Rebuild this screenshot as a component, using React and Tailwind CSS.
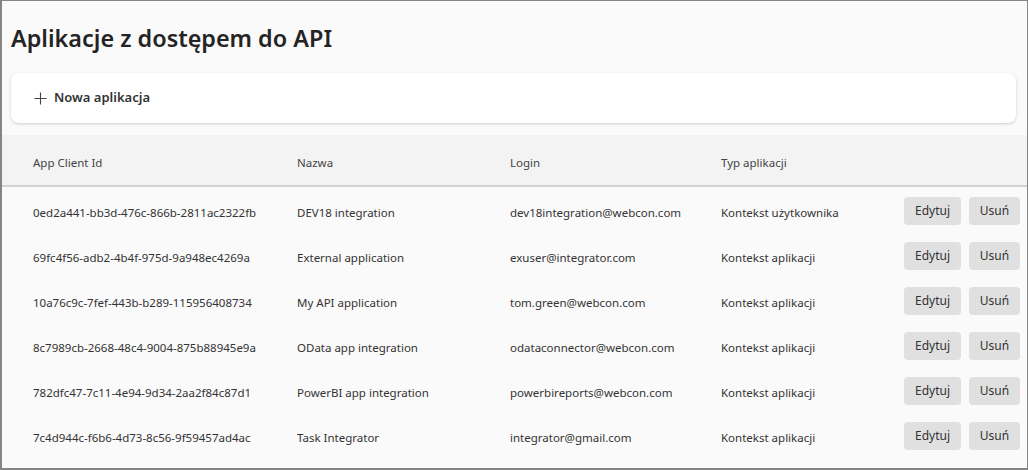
import React from 'react';

const rows = [
    { id: '0ed2a441-bb3d-476c-866b-2811ac2322fb', name: 'DEV18 integration', login: 'dev18integration@webcon.com', type: 'Kontekst użytkownika' },
    { id: '69fc4f56-adb2-4b4f-975d-9a948ec4269a', name: 'External application', login: 'exuser@integrator.com', type: 'Kontekst aplikacji' },
    { id: '10a76c9c-7fef-443b-b289-115956408734', name: 'My API application', login: 'tom.green@webcon.com', type: 'Kontekst aplikacji' },
    { id: '8c7989cb-2668-48c4-9004-875b88945e9a', name: 'OData app integration', login: 'odataconnector@webcon.com', type: 'Kontekst aplikacji' },
    { id: '782dfc47-7c11-4e94-9d34-2aa2f84c87d1', name: 'PowerBI app integration', login: 'powerbireports@webcon.com', type: 'Kontekst aplikacji' },
    { id: '7c4d944c-f6b6-4d73-8c56-9f59457ad4ac', name: 'Task Integrator', login: 'integrator@gmail.com', type: 'Kontekst aplikacji' },
];

const grid = 'grid grid-cols-[264px_213px_211px_1fr_auto] items-center pl-[31px] pr-[7px]';
const cell = 'pt-[6px] truncate';

export default function App() {
    return (
        <div
            className="w-[1028px] h-[470px] bg-[#fafafa] border border-l-2 border-b-2 border-[#858585] overflow-hidden text-[#333333]"
            style={{ fontFamily: '"Noto Sans", "Open Sans", sans-serif' }}
        >
            {/* Title */}
            <h1 className="pt-[21px] pl-[9px] text-[23.4px] leading-[32px] font-semibold text-[#242424]">
                Aplikacje z dostępem do API
            </h1>

            {/* Toolbar card */}
            <div className="mt-[19px] ml-[9px] mr-[11px] h-[50px] bg-white rounded-[8px] shadow-[0_1px_3px_rgba(0,0,0,0.18)] flex items-center pl-[23px]">
                <button className="flex items-center gap-[7px] text-[13px] font-semibold text-[#333333]">
                    <svg width="13" height="13" viewBox="0 0 13 13" className="text-[#444]">
                        <path d="M6.5 0.5v12M0.5 6.5h12" stroke="currentColor" strokeWidth="1.1" fill="none" />
                    </svg>
                    Nowa aplikacja
                </button>
            </div>

            {/* Table */}
            <div className="mt-[12px]">
                <div className={`${grid} h-[52px] bg-[#f3f3f3] border-b-2 border-[#d2d2d2] text-[11.5px] text-[#444444]`}>
                    <div className={cell}>App Client Id</div>
                    <div className={cell}>Nazwa</div>
                    <div className={cell}>Login</div>
                    <div className={cell}>Typ aplikacji</div>
                    <div />
                </div>
                {rows.map((row) => (
                    <div key={row.id} className={`${grid} h-[45px] text-[11.5px] text-[#333333]`}>
                        <div className={cell}>{row.id}</div>
                        <div className={cell}>{row.name}</div>
                        <div className={cell}>{row.login}</div>
                        <div className={cell}>{row.type}</div>
                        <div className="flex gap-[8px] mt-[2px]">
                            <button className="w-[57px] h-[28px] rounded-[4px] bg-[#e0e0e0] text-[12px] text-[#333333]">Edytuj</button>
                            <button className="w-[51px] h-[28px] rounded-[4px] bg-[#e0e0e0] text-[12px] text-[#333333]">Usuń</button>
                        </div>
                    </div>
                ))}
            </div>
        </div>
    );
}
